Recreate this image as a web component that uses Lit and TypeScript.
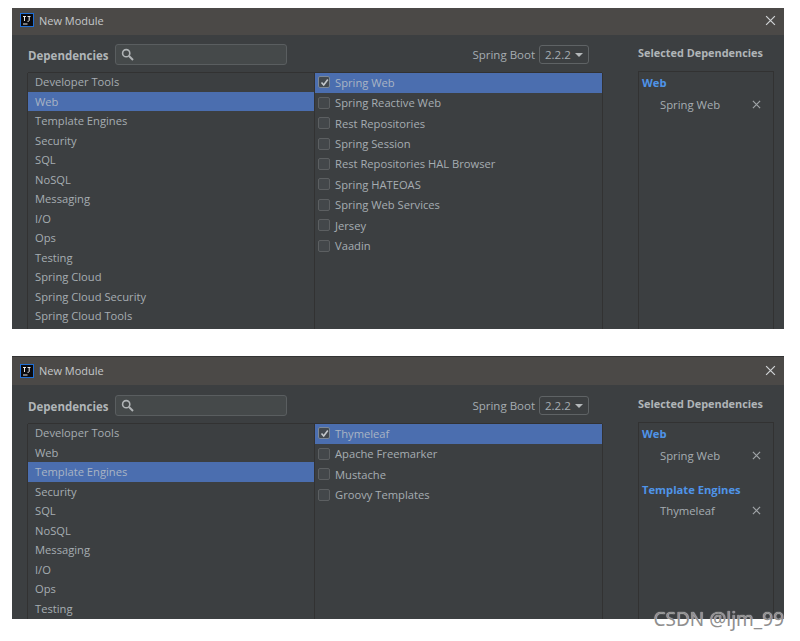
import { LitElement, html, css, svg } from "lit";
import { customElement } from "lit/decorators.js";

const CATS = ["Developer Tools","Web","Template Engines","Security","SQL","NoSQL","Messaging","I/O","Ops","Testing","Spring Cloud","Spring Cloud Security","Spring Cloud Tools"];

interface Win {
  cat: string;
  items: string[];
  checked: string;
  selected: { group: string; items: string[] }[];
  tall: boolean;
}

const WINS: Win[] = [
  { cat: "Web", tall: true, checked: "Spring Web",
    items: ["Spring Web","Spring Reactive Web","Rest Repositories","Spring Session","Rest Repositories HAL Browser","Spring HATEOAS","Spring Web Services","Jersey","Vaadin"],
    selected: [{ group: "Web", items: ["Spring Web"] }] },
  { cat: "Template Engines", tall: false, checked: "Thymeleaf",
    items: ["Thymeleaf","Apache Freemarker","Mustache","Groovy Templates"],
    selected: [{ group: "Web", items: ["Spring Web"] }, { group: "Template Engines", items: ["Thymeleaf"] }] },
];

const cross = (size: number, color: string, w: number) => svg`<svg width=${size} height=${size} viewBox="0 0 10 10"><path d="M1 1L9 9M9 1L1 9" stroke=${color} stroke-width=${w} fill="none"/></svg>`;

@customElement("app-root")
export class AppRoot extends LitElement {
  static styles = css`
    :host { display: block; position: relative; width: 800px; height: 641px; background: #fff; overflow: hidden;
      font-family: "Open Sans", "Noto Sans", sans-serif; font-size: 11.5px; color: #a6adb2; }
    .page { display: flex; flex-direction: column; gap: 27px; padding: 8px 16px 0 12px; }
    .win { background: #3c3f41; overflow: hidden; display: flex; flex-direction: column; }
    .win.tall { height: 321px; }
    .win.short { height: 263px; border-top: 1px solid #333; box-sizing: border-box; }
    .title { height: 27px; box-sizing: border-box; flex: none; background: #4b4947; display: flex; align-items: center; padding: 0 8px 3px 8px; gap: 5px; color: #c4c7c9; font-size: 11px; }
    .win.short .title { height: 28px; padding-bottom: 1px; }
    .logo { width: 14px; height: 14px; box-sizing: border-box; background: #0a0a0e; border: 1px solid #1f6fd6; flex: none; display: flex; flex-direction: column; align-items: center; }
    .logo svg { display: block; }
    .name { flex: 1; }
    .body { flex: 1; min-height: 0; display: flex; padding: 9px 11px 0 16px; gap: 36px; }
    .short .body { padding-top: 10px; }
    .main { width: 574px; flex: none; display: flex; flex-direction: column; }
    .toolbar { height: 21px; display: flex; align-items: center; margin-bottom: 7px; flex: none; }
    .deps { font-weight: 700; width: 87px; color: #b0b5b8; font-size: 11.5px; padding-top: 1px; }
    .search { width: 172px; height: 21px; box-sizing: border-box; border: 1px solid #5a5e60; border-radius: 3px; background: #45494a; display: flex; align-items: center; padding-left: 5px; }
    .spacer { flex: 1; }
    .sb { margin-right: 4px; }
    .select { width: 50px; height: 19px; box-sizing: border-box; border: 1px solid #5f6365; border-radius: 3px; display: flex; align-items: center; justify-content: space-between; padding: 0 5px 0 5px; margin-right: 13px; }
    .caret { width: 0; height: 0; border-left: 4px solid transparent; border-right: 4px solid transparent; border-top: 4px solid #b4b8ba; }
    .lists { flex: 1; min-height: 0; display: flex; border-top: 1px solid #323232; font-size: 11.2px; }
    .cats { width: 286px; flex: none; border-left: 1px solid #323232; border-right: 1px solid #323232; margin-left: -1px; }
    .cat { height: 19.5px; line-height: 19.5px; padding-left: 7px; white-space: nowrap; }
    .cat:first-child { margin-top: -1px; }
    .short .cat:first-child { margin-top: -1px; }
    .cat.on, .item.on { background: #4b6eaf; color: #a9b4c4; }
    .items { width: 287px; flex: none; border-right: 1px solid #323232; }
    .item { height: 20.45px; box-sizing: border-box; padding: 0 0 1px 3px; display: flex; align-items: center; gap: 5px; white-space: nowrap; }
    .item:first-child { margin-top: -0.5px; }
    .box { width: 12px; height: 12px; box-sizing: border-box; border: 1px solid #5c5f61; border-radius: 2px; background: #43474a; flex: none; display: flex; align-items: center; justify-content: center; }
    .item.on .box { background: #43494f; border-color: #7c8896; }
    .side { flex: 1; min-width: 0; display: flex; flex-direction: column; }
    .side-title { height: 18px; font-weight: 700; color: #b0b5b8; font-size: 10.9px; white-space: nowrap; margin-bottom: 9px; line-height: 18px; }
    .side-list { flex: 1; border: 1px solid #323232; border-bottom: none; padding: 0 0 0 3px; margin-right: -1px; }
    .group { color: #4f94e8; font-weight: 700; line-height: 20px; height: 20px; margin: 1px 0; font-size: 11.2px; }
    .sel { display: flex; align-items: center; justify-content: space-between; height: 20px; padding: 0 12px 0 18px; margin-bottom: 14.5px; font-size: 11.3px; }
    .mark { position: absolute; right: 16px; top: 605px; font-size: 19px; line-height: 28px; color: #8f8f8f; font-family: "Noto Sans", sans-serif; text-shadow: 0 0 1px #fff; white-space: nowrap; }
  `;

  private renderWin(w: Win) {
    const cats = w.tall ? CATS : CATS.slice(0, 10);
    return html`
      <div class="win ${w.tall ? "tall" : "short"}">
        <div class="title">
          <div class="logo">
            <svg width="12" height="12" viewBox="0 0 12 12">
              <path d="M2 2.5H5M3.5 2.5V7M6.5 2.5H9.5M8.2 2.5V6.5Q8.2 7.5 6.5 7.3" stroke="#e8e8e8" stroke-width="1" fill="none"/>
              <path d="M2 10H6.5" stroke="#e8e8e8" stroke-width="1"/>
            </svg>
          </div>
          <span class="name">New Module</span>
          ${cross(11, "#d0d3d5", 1.1)}
        </div>
        <div class="body">
          <div class="main">
            <div class="toolbar">
              <span class="deps">Dependencies</span>
              <div class="search">
                <svg width="13" height="13" viewBox="0 0 13 13"><circle cx="5.2" cy="5.2" r="3.6" stroke="#b0b4b6" stroke-width="1.6" fill="none"/><path d="M8 8L12 12" stroke="#b0b4b6" stroke-width="2"/></svg>
              </div>
              <span class="spacer"></span>
              <span class="sb">Spring Boot</span>
              <div class="select"><span>2.2.2</span><span class="caret"></span></div>
            </div>
            <div class="lists">
              <div class="cats">
                ${cats.map(c => html`<div class="cat ${c === w.cat ? "on" : ""}">${c}</div>`)}
              </div>
              <div class="items">
                ${w.items.map(i => html`
                  <div class="item ${i === w.checked ? "on" : ""}">
                    <span class="box">${i === w.checked ? svg`<svg width="9" height="9" viewBox="0 0 9 9"><path d="M1.5 4.5L3.7 7L7.8 1.5" stroke="#c4c8cc" stroke-width="1.6" fill="none"/></svg>` : ""}</span>
                    <span>${i}</span>
                  </div>`)}
              </div>
            </div>
          </div>
          <div class="side">
            <div class="side-title">Selected Dependencies</div>
            <div class="side-list">
              ${w.selected.map(g => html`
                <div class="group">${g.group}</div>
                ${g.items.map(i => html`<div class="sel"><span>${i}</span>${cross(9, "#a0a4a7", 1.3)}</div>`)}
              `)}
            </div>
          </div>
        </div>
      </div>`;
  }

  render() {
    return html`<div class="page">${WINS.map(w => this.renderWin(w))}</div><div class="mark">CSDN @ljm_99</div>`;
  }
}
